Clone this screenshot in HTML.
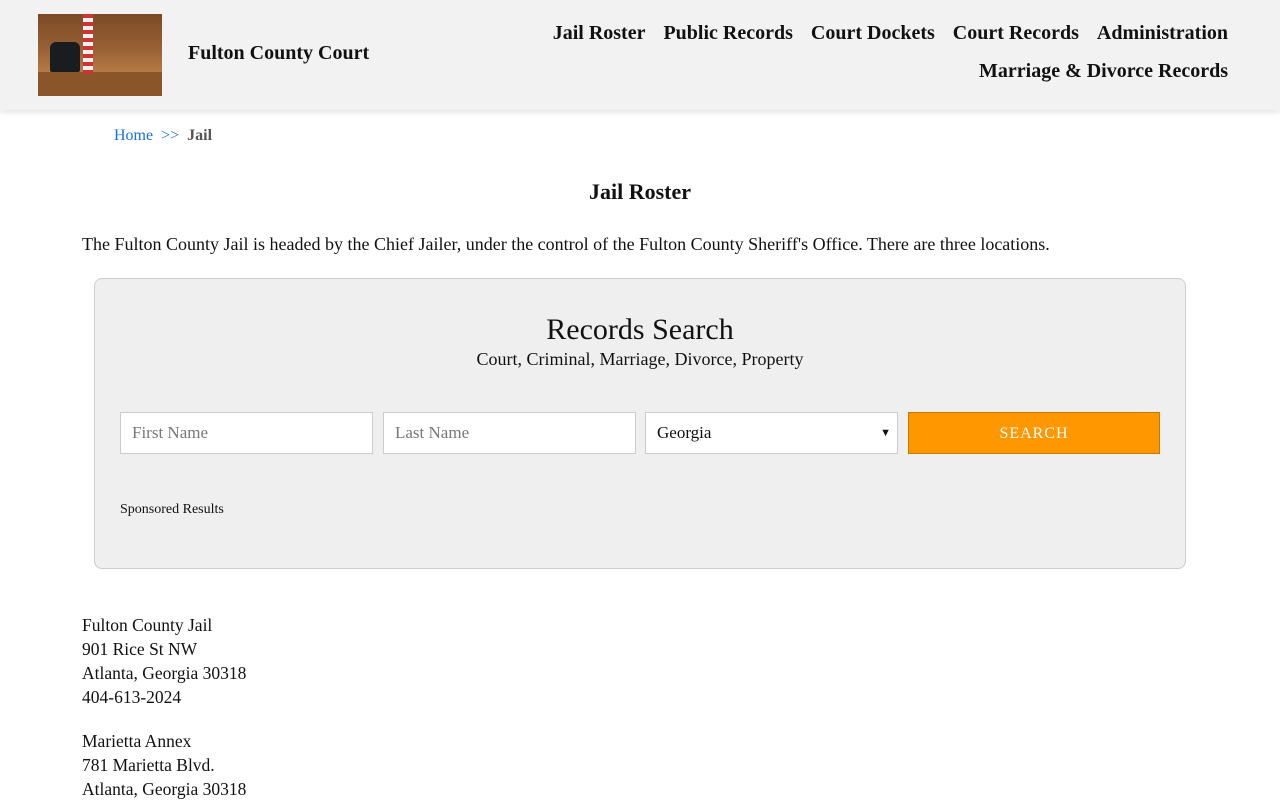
<!DOCTYPE html>
<html><head><meta charset="utf-8"><style>
body{margin:0;background:#fff;font-family:"Liberation Serif",serif;color:#111;}
.hdr{height:110px;background:#f2f2f2;box-shadow:0 2px 6px rgba(0,0,0,.12);position:relative;}
.logo{position:absolute;left:38px;top:14px;width:124px;height:82px;background:linear-gradient(180deg,#7a4a26 0%,#9a6236 45%,#b57a45 70%,#7d4a24 100%);overflow:hidden}
.logo .chair{position:absolute;left:12px;top:28px;width:30px;height:30px;background:#1a1d20;border-radius:6px 6px 2px 2px}
.logo .flag{position:absolute;left:45px;top:0;width:10px;height:60px;background:repeating-linear-gradient(180deg,#c33 0 4px,#eee 4px 8px)}
.logo .desk{position:absolute;left:0;top:58px;width:124px;height:24px;background:#8a5529}
.title{position:absolute;left:188px;top:42px;font-size:20px;font-weight:bold}
.nav{position:absolute;right:52px;top:14px;text-align:right;font-size:20px;font-weight:bold;line-height:38px}
.nav span{margin-left:18px}
.bc{position:absolute;left:114px;top:127px;font-size:16px}
.bc a{color:#1a6ee0;text-decoration:none}
h1{position:absolute;left:0;width:1280px;top:179px;margin:0;text-align:center;font-size:22px}
.intro{position:absolute;left:82px;top:234px;font-size:18px}
.box{position:absolute;left:94px;top:278px;width:1090px;height:289px;background:#efefef;border:1px solid #ccc;border-radius:8px}
.box h2{margin:0;position:absolute;top:34px;width:100%;text-align:center;font-weight:normal;font-size:30px}
.box .sub{position:absolute;top:70px;width:100%;text-align:center;font-size:18px}
.f{position:absolute;top:133px;height:42px;background:#fff;border:1px solid #ccc;box-sizing:border-box;font-size:17px;line-height:40px;padding-left:11px;width:253px}
.btn{position:absolute;left:813px;top:133px;width:252px;height:42px;background:#ff9800;border:1px solid #c77800;box-sizing:border-box;color:#fff;text-align:center;line-height:42px;font-size:16px;letter-spacing:1px}
.sp{position:absolute;left:25px;top:223px;font-size:14px}
.addr{position:absolute;left:82px;font-size:17.5px;line-height:24px}
</style></head><body>
<div class="hdr">
<div class="logo"><div class="desk"></div><div class="flag"></div><div class="chair"></div></div>
<div class="title">Fulton County Court</div>
<div class="nav"><div><span>Jail Roster</span><span>Public Records</span><span>Court Dockets</span><span>Court Records</span><span>Administration</span></div><div>Marriage &amp; Divorce Records</div></div>
</div>
<div class="bc"><a>Home</a> &nbsp;<a>&gt;&gt;</a>&nbsp; <b style="color:#555">Jail</b></div>
<h1>Jail Roster</h1>
<div class="intro">The Fulton County Jail is headed by the Chief Jailer, under the control of the Fulton County Sheriff's Office. There are three locations.</div>
<div class="box">
<h2>Records Search</h2>
<div class="sub">Court, Criminal, Marriage, Divorce, Property</div>
<div class="f" style="left:25px;color:#777">First Name</div>
<div class="f" style="left:288px;color:#777">Last Name</div>
<div class="f" style="left:550px;color:#111">Georgia<span style="position:absolute;right:6px;font-size:11px">&#9660;</span></div>
<div class="btn">SEARCH</div>
<div class="sp">Sponsored Results</div>
</div>
<div class="addr" style="top:613px">Fulton County Jail<br>901 Rice St NW<br>Atlanta, Georgia 30318<br>404-613-2024</div>
<div class="addr" style="top:729px">Marietta Annex<br>781 Marietta Blvd.<br>Atlanta, Georgia 30318</div>
</body></html>
